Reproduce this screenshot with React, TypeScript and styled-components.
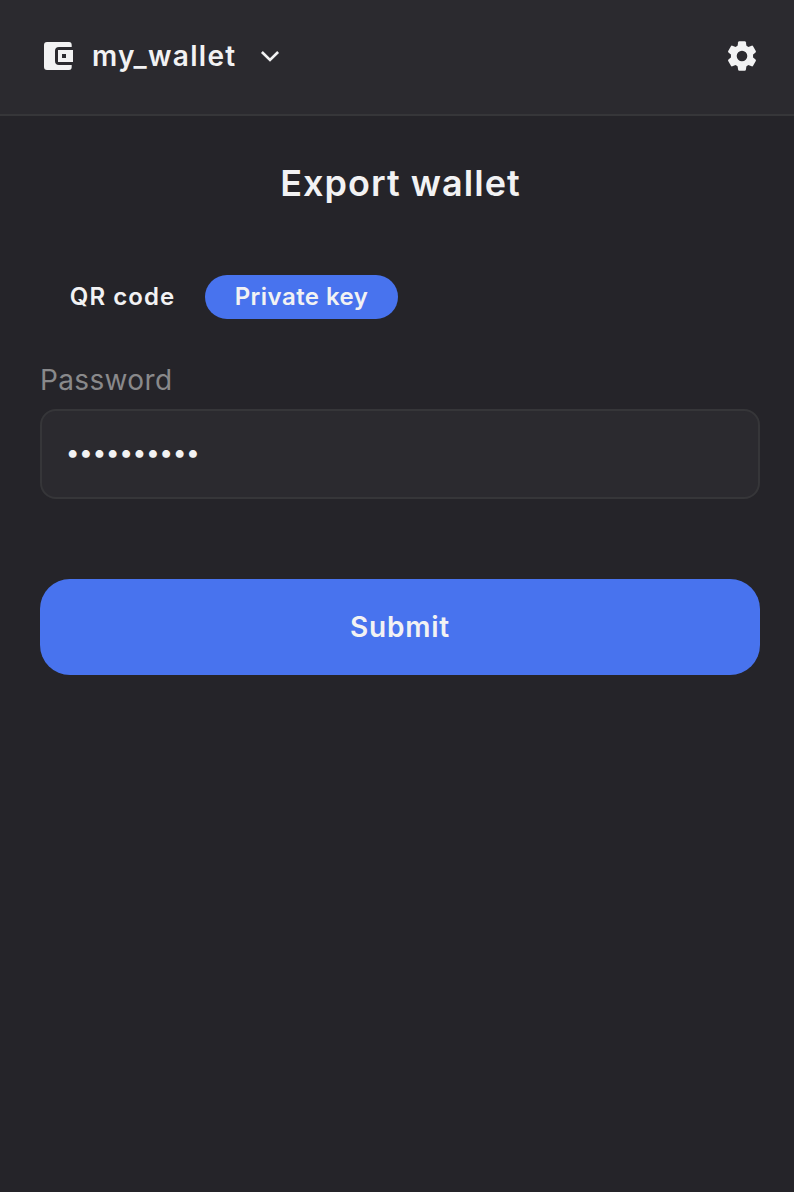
import React, { useState } from 'react';
import styled, { createGlobalStyle } from 'styled-components';

const GlobalStyle = createGlobalStyle`
  *, *::before, *::after { box-sizing: border-box; }
  body {
    margin: 0;
    background: #252429;
    color: #f2f2f3;
    font-family: Inter, 'Liberation Sans', sans-serif;
    overflow-x: hidden;
  }
`;

const Page = styled.div`
  width: 800px;
  min-height: 1192px;
  background: #252429;
`;

const Header = styled.header`
  display: flex;
  align-items: center;
  justify-content: space-between;
  height: 116px;
  padding: 0 40px 2px;
  background: #2b2a2f;
  border-bottom: 2px solid #363639;
`;

const WalletPicker = styled.button`
  display: flex;
  align-items: center;
  padding: 0 0 0 4px;
  border: 0;
  background: none;
  color: inherit;
  font: inherit;
`;

const WalletName = styled.span`
  width: 143px;
  margin: 0 25px 0 18px;
  font-size: 28px;
  font-weight: 600;
  line-height: 36px;
  letter-spacing: 1.3px;
  white-space: nowrap;
  text-align: left;
`;

const IconButton = styled.button`
  display: flex;
  padding: 0;
  border: 0;
  background: none;
  color: inherit;
`;

const Content = styled.main`
  display: flex;
  flex-direction: column;
  padding: 44px 40px 0;
`;

const Title = styled.h1`
  margin: 0;
  padding-left: 1px;
  font-size: 36px;
  font-weight: 600;
  line-height: 46px;
  letter-spacing: 1.05px;
  text-align: center;
`;

const Tabs = styled.div`
  display: flex;
  margin-top: 69px;
`;

const Tab = styled.button<{ $active: boolean; $width: number; $tracking: number }>`
  width: ${({ $width }) => $width}px;
  height: 44px;
  padding: 0;
  border: 0;
  border-radius: 22px;
  background: ${({ $active }) => ($active ? '#4873ee' : 'transparent')};
  color: inherit;
  font: 600 24px/44px Inter, 'Liberation Sans', sans-serif;
  letter-spacing: ${({ $tracking }) => $tracking}px;
  white-space: nowrap;
`;

const Label = styled.label`
  margin-top: 43px;
  color: #89898b;
  font-size: 28px;
  line-height: 36px;
  letter-spacing: 0.35px;
`;

const PasswordInput = styled.input`
  height: 90px;
  margin-top: 11px;
  padding: 0 24px 4px;
  border: 2px solid #363639;
  border-radius: 16px;
  outline: 0;
  background: #2b2a2f;
  color: #f2f2f3;
  font: 500 25px Inter, 'Liberation Sans', sans-serif;
  letter-spacing: 0.03px;
`;

const SubmitButton = styled.button`
  height: 96px;
  margin-top: 80px;
  border: 0;
  border-radius: 30px;
  background: #4873ee;
  color: inherit;
  font: 600 28px/36px Inter, 'Liberation Sans', sans-serif;
  letter-spacing: 0.8px;
`;

const WalletIcon = () => (
  <svg width="30" height="28" viewBox="0 0 30 28" fill="currentColor" aria-hidden="true">
    <path d="M3 0H25Q27.7 0 27.7 3V5H15Q11 5 11 9V19Q11 23 15 23H27.7V25Q27.7 28 25 28H3Q0 28 0 25V3Q0 0 3 0Z" />
    <path fillRule="evenodd" d="M14 8H29V20H14ZM18 12V16H22V12Z" />
  </svg>
);

const ChevronIcon = () => (
  <svg width="20" height="12" viewBox="0 0 20 12" fill="none" stroke="currentColor" strokeWidth="2.6" aria-hidden="true">
    <path d="M1.9 2L10 10L18.1 2" />
  </svg>
);

const GearIcon = () => (
  <svg width="36" height="36" viewBox="-18 -18 36 36" fill="currentColor" aria-hidden="true">
    <circle r="8.2" fill="none" stroke="currentColor" strokeWidth="5.8" />
    {[0, 60, 120, 180, 240, 300].map((angle) => (
      <path key={angle} transform={`scale(0.97 1) rotate(${angle})`} d="M-4.9 -8L-4 -13.8Q-3.8 -14.8 -2.8 -14.8H2.8Q3.8 -14.8 4 -13.8L4.9 -8Z" />
    ))}
  </svg>
);

export default function App() {
  const [tab, setTab] = useState<'qr' | 'key'>('key');
  const [password, setPassword] = useState('walletpass');

  return (
    <Page>
      <GlobalStyle />
      <Header>
        <WalletPicker>
          <WalletIcon />
          <WalletName>my_wallet</WalletName>
          <ChevronIcon />
        </WalletPicker>
        <IconButton aria-label="Settings">
          <GearIcon />
        </IconButton>
      </Header>
      <Content>
        <Title>Export wallet</Title>
        <Tabs>
          <Tab $active={tab === 'qr'} $width={165} $tracking={1.05} onClick={() => setTab('qr')}>QR code</Tab>
          <Tab $active={tab === 'key'} $width={193} $tracking={0.45} onClick={() => setTab('key')}>Private key</Tab>
        </Tabs>
        <Label htmlFor="password">Password</Label>
        <PasswordInput
          id="password"
          type="password"
          value={password}
          onChange={(event) => setPassword(event.target.value)}
        />
        <SubmitButton>Submit</SubmitButton>
      </Content>
    </Page>
  );
}
